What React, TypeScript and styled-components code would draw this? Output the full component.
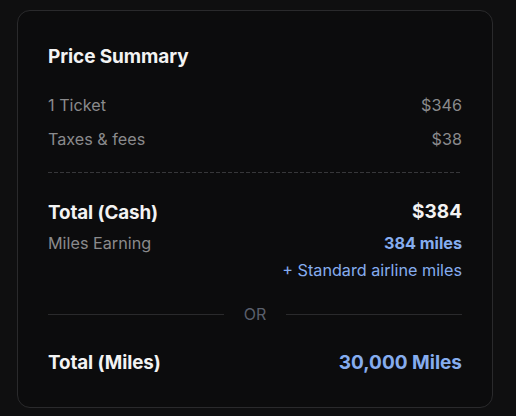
import React from "react";
import styled, { createGlobalStyle } from "styled-components";

const Global = createGlobalStyle`
  html, body { margin: 0; padding: 0; background: #0f0f10; }
  body { font-family: Inter, "Noto Sans", sans-serif; -webkit-font-smoothing: antialiased; }
  * { box-sizing: border-box; }
`;

const Page = styled.div`
  width: 516px;
  height: 416px;
  padding: 10px 0 0 17px;
  background: #0f0f10;
`;

const Card = styled.section`
  width: 476px;
  height: 398px;
  border: 1px solid #2a2a2c;
  border-radius: 13px;
  background: #0c0c0d;
  padding: 33px 30px 0 30px;
  display: flex;
  flex-direction: column;
`;

const Title = styled.h2`
  margin: 0 0 24px 0;
  font-size: 19px;
  line-height: 26px;
  font-weight: 700;
  letter-spacing: -0.005em;
  color: #f3f3f3;
`;

const Row = styled.div<{ $gap?: number }>`
  display: flex;
  justify-content: space-between;
  align-items: flex-start;
  margin-top: ${(p) => p.$gap ?? 0}px;
`;

const Label = styled.span<{ $strong?: boolean }>`
  font-size: ${(p) => (p.$strong ? 18.8 : 16.2)}px;
  line-height: ${(p) => (p.$strong ? 24 : 22)}px;
  font-weight: ${(p) => (p.$strong ? 700 : 400)};
  letter-spacing: ${(p) => (p.$strong ? "-0.005em" : "0")};
  color: ${(p) => (p.$strong ? "#f3f3f3" : "#8a8a8c")};
`;

const Value = styled.span<{ $tone?: "white" | "gray" | "blue"; $bold?: boolean; $size?: number }>`
  font-size: ${(p) => p.$size ?? 16.2}px;
  line-height: 22px;
  font-weight: ${(p) => (p.$bold ? 700 : 400)};
  letter-spacing: 0;
  text-align: right;
  color: ${(p) =>
    p.$tone === "white" ? "#f3f3f3" : p.$tone === "blue" ? "#86adef" : "#8a8a8c"};
`;

const Dashed = styled.div`
  height: 1px;
  margin: 22px 0 28px 0;
  background: repeating-linear-gradient(
    to right,
    #37373a 0 4px,
    transparent 4px 6px
  );
`;

const Stack = styled.div`
  display: flex;
  flex-direction: column;
  align-items: flex-end;
  gap: 5px;
`;

const OrDivider = styled.div`
  display: flex;
  align-items: center;
  gap: 20px;
  margin: 23px 0 26px 0;
`;

const OrLine = styled.div`
  flex: 1;
  height: 1px;
  background: #2a2a2c;
`;

const OrText = styled.span`
  font-size: 16px;
  line-height: 20px;
  color: #5a5f6b;
`;

const BigValue = styled.span`
  font-size: 19px;
  line-height: 26px;
  font-weight: 700;
  color: #86adef;
`;

const BigLabel = styled.span`
  font-size: 18.8px;
  line-height: 26px;
  font-weight: 700;
  letter-spacing: -0.005em;
  color: #f3f3f3;
`;

export default function App() {
  return (
    <>
      <Global />
      <Page>
        <Card>
          <Title>Price Summary</Title>
          <Row>
            <Label>1 Ticket</Label>
            <Value>$346</Value>
          </Row>
          <Row $gap={12}>
            <Label>Taxes &amp; fees</Label>
            <Value>$38</Value>
          </Row>
          <Dashed />
          <Row>
            <Label $strong>Total (Cash)</Label>
            <Value $tone="white" $bold $size={19}>$384</Value>
          </Row>
          <Row $gap={7}>
            <Label>Miles Earning</Label>
            <Stack>
              <Value $tone="blue" $bold>384 miles</Value>
              <Value $tone="blue">+ Standard airline miles</Value>
            </Stack>
          </Row>
          <OrDivider>
            <OrLine />
            <OrText>OR</OrText>
            <OrLine />
          </OrDivider>
          <Row>
            <BigLabel>Total (Miles)</BigLabel>
            <BigValue>30,000 Miles</BigValue>
          </Row>
        </Card>
      </Page>
    </>
  );
}
